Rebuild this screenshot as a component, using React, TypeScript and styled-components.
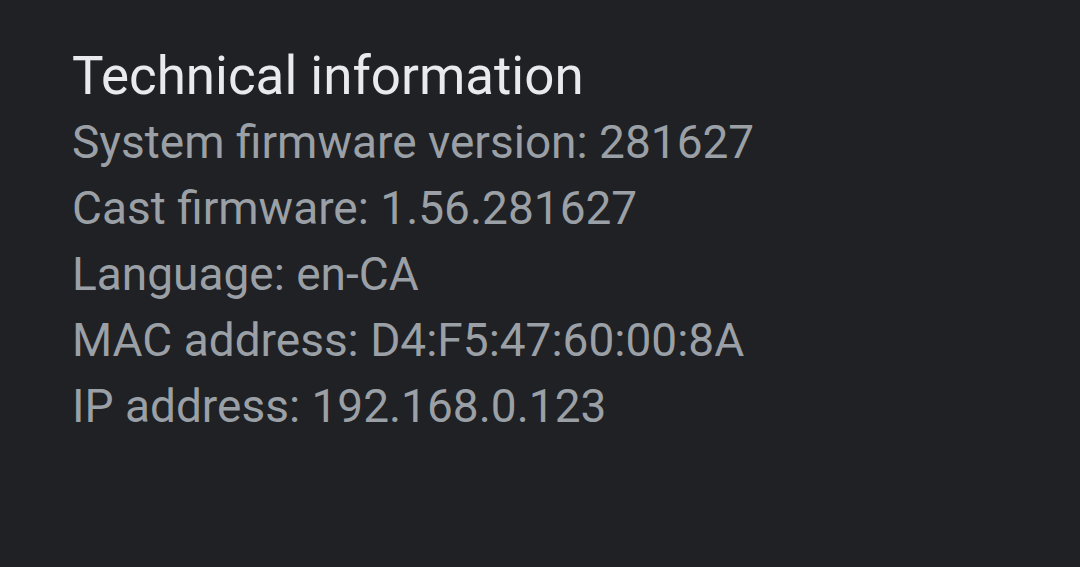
import styled, { createGlobalStyle } from "styled-components";

const GlobalStyle = createGlobalStyle`
    html, body {
        margin: 0;
        padding: 0;
        background-color: #202124;
    }
`;

const rows = [
    "System firmware version: 281627",
    "Cast firmware: 1.56.281627",
    "Language: en-CA",
    "MAC address: D4:F5:47:60:00:8A",
    "IP address: 192.168.0.123",
];

const App = () => {
    return (
        <>
            <GlobalStyle />
            <Page>
                <Title>Technical information</Title>
                <List>
                    {rows.map((row) => (
                        <Row key={row}>{row}</Row>
                    ))}
                </List>
            </Page>
        </>
    );
};

const Page = styled.div`
    width: 1080px;
    height: 567px;
    box-sizing: border-box;
    padding: 43px 0 0 72px;
    background-color: #202124;
    font-family: Roboto, "Noto Sans", sans-serif;
`;

const Title = styled.h2`
    margin: 0;
    color: #e8eaed;
    font-size: 52.9px;
    font-weight: 400;
    line-height: 66px;
`;

const List = styled.div`
    display: flex;
    flex-direction: column;
`;

const Row = styled.div`
    color: #9aa0a6;
    font-size: 46px;
    line-height: 66px;
`;

export default App;
